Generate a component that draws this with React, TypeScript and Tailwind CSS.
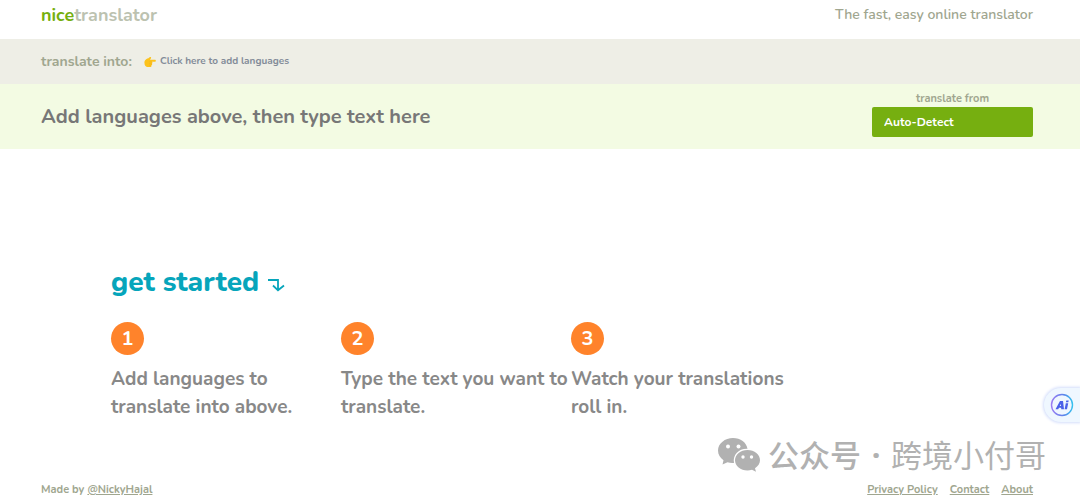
import React from 'react';

const steps = [
  'Add languages to translate into above.',
  'Type the text you want to translate.',
  'Watch your translations roll in.',
];

const footerLinks = ['Privacy Policy', 'Contact', 'About'];

const PointingHand = () => (
  <svg viewBox="0 0 24 22" className="w-3 h-3" aria-hidden="true">
    <path
      fill="#fcc21b"
      d="M1 10C2 6 6 4 9 3.500C11 1 13 0 14 1.500C14.800 3 13 5 12 6.500H21.500C24.500 6.500 24.500 10.500 21.500 10.500H15.500C17.500 11 17.500 14 15.500 14.200C17 15 16.500 17.500 14.500 17.700C15.500 19 14.500 21 12.500 21H7C4 21 0 18 1 10Z"
    />
    <path
      fill="none"
      stroke="#f0a91c"
      strokeWidth="0.800"
      d="M10 10.500H15.500M10 14.200H15.500M10 17.700H14.500"
    />
  </svg>
);

const TurnArrow = () => (
  <svg
    viewBox="0 0 18 14"
    className="w-[18px] h-3.5 mt-1.5"
    fill="none"
    stroke="#06a5bb"
    strokeWidth="1.800"
    aria-hidden="true"
  >
    <path d="M1 2H11V12M6 7.500L11 12.300L17 7.500" />
  </svg>
);

const WeChatIcon = () => (
  <svg viewBox="0 0 42 35" className="w-[42px] h-[35px]" aria-hidden="true">
    <path
      fill="#b1b1b1"
      d="M15 1C7 1 0 6.500 0 13.500C0 17.500 2.200 21 5.500 23.300L4.500 27.500L9.500 25.300C11.500 26 13.500 26.200 16 26C14.500 18 20.500 11.500 29.500 11.800C28.500 5.500 22.500 1 15 1Z"
    />
    <path
      fill="#b1b1b1"
      d="M29.500 13C22.500 13 17 17.700 17 23.300C17 29 22.500 33.500 29.500 33.500C31 33.500 32.600 33.200 34 32.700L38 34.700L37 31.200C40 29.200 42 26.500 42 23.300C42 17.700 36.500 13 29.500 13Z"
    />
    <g fill="#fff">
      <circle cx="10" cy="9.500" r="2" />
      <circle cx="20.500" cy="9.500" r="2" />
      <circle cx="25" cy="20" r="1.700" />
      <circle cx="33.500" cy="20" r="1.700" />
    </g>
  </svg>
);

const AiIcon = () => (
  <svg viewBox="0 0 24 24" className="w-6 h-6" fill="none" aria-hidden="true">
    <defs>
      <linearGradient id="ring" x1="0" y1="0.300" x2="1" y2="0.300">
        <stop offset="0" stopColor="#9a7bf3" />
        <stop offset="0.600" stopColor="#5b84ea" />
        <stop offset="1" stopColor="#35c0ee" />
      </linearGradient>
    </defs>
    <circle cx="12" cy="12" r="10.500" stroke="url(#ring)" strokeWidth="1.400" />
    <path
      fill="#4a60e8"
      fillRule="evenodd"
      d="M5.500 16.200L10 8H13L14 16.200H11.300L11.100 14.800H9L8.200 16.200ZM9.700 13H11L10.800 11Z"
    />
    <path fill="#4a60e8" d="M15.800 10.300H18.200L17 16.200H14.600ZM16.300 7.500H18.700L18.300 9.300H15.900Z" />
  </svg>
);

const App = () => {
  return (
    <div className="relative flex flex-col min-h-screen overflow-hidden bg-white font-['Nunito','Lato',sans-serif] font-bold text-[#a0a68f]">
      <header className="flex items-center justify-between h-[39px] pl-[41px] pr-[47px] pb-2.5">
        <a href="#" className="text-lg leading-6 text-[#bcc2b0]">
          <span className="text-[#76af10]">nice</span>translator
        </a>
        <p className="text-sm font-semibold">The fast, easy online translator</p>
      </header>

      <div className="flex items-center gap-3 h-[45px] pl-[41px] pr-[47px] bg-[#eeeee6]">
        <span className="text-sm">translate into:</span>
        <button className="flex items-center gap-1 text-[10px] text-[#828b98]">
          <PointingHand />
          Click here to add languages
        </button>
      </div>

      <div className="flex items-center justify-between h-[65px] pl-[41px] pr-[47px] bg-[#f3fbe3]">
        <input
          aria-label="Text to translate"
          placeholder="Add languages above, then type text here"
          className="flex-1 min-w-0 bg-transparent text-xl text-[#777] placeholder:text-[#777] outline-none"
        />
        <div className="flex flex-col w-[161px] pb-1.5">
          <label htmlFor="from" className="text-center text-[11px] leading-4">
            translate from
          </label>
          <select
            id="from"
            className="appearance-none h-[30px] px-3 rounded-xs bg-[#76af10] text-xs text-white"
          >
            <option>Auto-Detect</option>
          </select>
        </div>
      </div>

      <main className="flex-1 pl-[111px] pt-[113px]">
        <h1 className="flex items-center gap-2 text-[28px] leading-10 font-extrabold text-[#06a5bb]">
          get started
          <TurnArrow />
        </h1>
        <ol className="grid grid-cols-3 max-w-[690px] mt-5">
          {steps.map((step, idx) => (
            <li key={idx}>
              <span className="flex items-center justify-center size-[33px] rounded-full bg-[#ff832b] text-xl text-white">
                {idx + 1}
              </span>
              <p className="mt-2.5 text-[19px] leading-7 text-[#888]">{step}</p>
            </li>
          ))}
        </ol>
      </main>

      <footer className="flex items-center justify-between h-[18px] pl-[41px] pr-[47px] text-[11px]">
        <p>
          Made by{' '}
          <a href="#" className="underline">
            @NickyHajal
          </a>
        </p>
        <nav className="flex gap-3">
          {footerLinks.map((link) => (
            <a key={link} href="#" className="underline">
              {link}
            </a>
          ))}
        </nav>
      </footer>

      <button
        aria-label="Ai"
        className="absolute right-0 bottom-[77px] flex items-center w-9 h-[34px] pl-1.5 rounded-l-full bg-[#eff7ff] shadow-[0_0_3px_1px_#d3ddfb]"
      >
        <AiIcon />
      </button>

      <div className="absolute right-[34px] bottom-[25px] flex items-center gap-2 font-['Noto_Sans_CJK_SC',sans-serif] font-normal text-[31px] leading-10 text-[#b1b1b1]">
        <WeChatIcon />
        <div className="flex">
          <span className="font-medium">公众号</span>
          <span className="w-[30px] text-center font-['Noto_Sans',sans-serif] font-bold">·</span>
          <span>跨境小付哥</span>
        </div>
      </div>
    </div>
  );
};

export default App;
